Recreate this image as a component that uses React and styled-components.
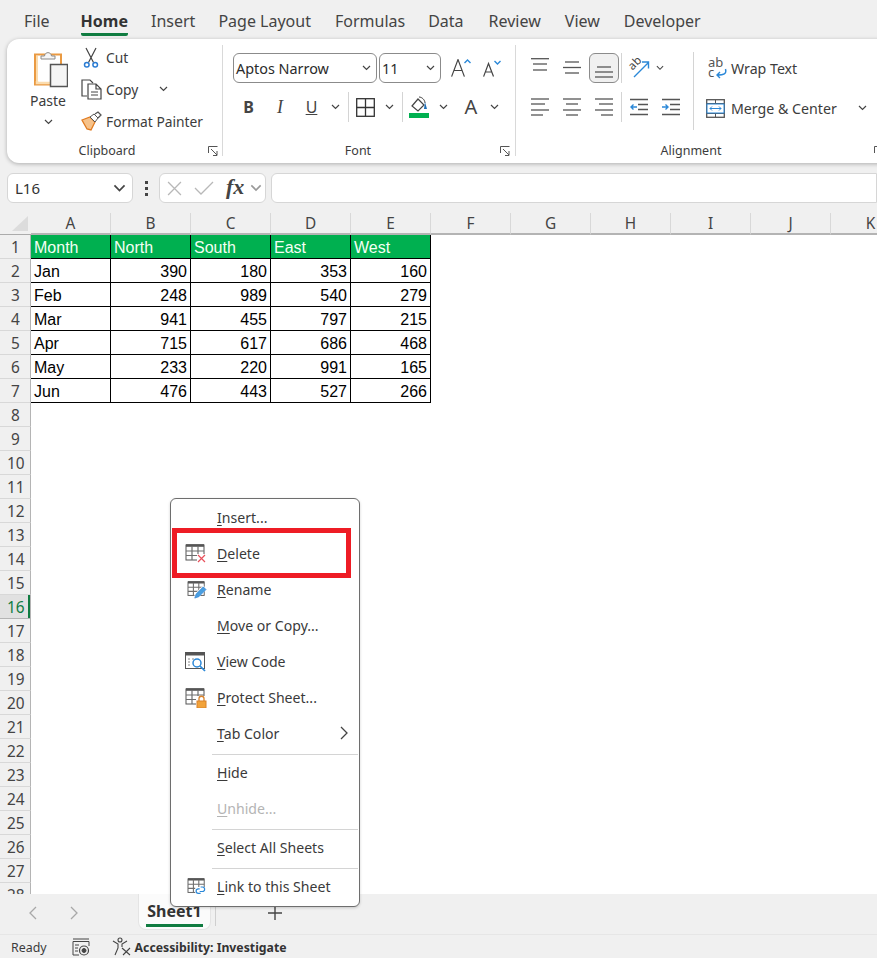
import React from "react";
import styled, { createGlobalStyle } from "styled-components";

const Global = createGlobalStyle`
  html, body { margin: 0; padding: 0; background: #f0f0f0; overflow: hidden; }
  * { box-sizing: border-box; }
`;
const UI = `"Noto Sans", "Open Sans", sans-serif`;

const Page = styled.div`
  position: relative; width: 877px; height: 958px; overflow: hidden;
  display: flex; flex-direction: column; background: #f0f0f0;
  font-family: ${UI}; color: #3c3c3c;
`;
const TabBar = styled.nav`
  height: 39px; flex: none; display: flex; gap: 23px; padding-left: 24px; align-items: flex-start;
`;
const MenuTab = styled.div`
  position: relative; height: 36px; line-height: 43px; font-size: 16px; white-space: nowrap;
  font-weight: ${p => (p.$active ? 700 : 400)};
  color: ${p => (p.$active ? "#333" : "#444")};
  margin-right: ${p => p.$mr || 0}px;
  border-bottom: ${p => (p.$active ? "3px solid #107c41" : "none")};
  border-radius: 0 0 2px 2px;
`;
const Ribbon = styled.section`
  flex: none; margin-left: 7px; width: 920px; height: 124px; padding-top: 3px; display: flex;
  background: #fff; border-radius: 12px 0 0 12px; box-shadow: 0 1px 4px rgba(0,0,0,.28);
`;
const Group = styled.div`
  flex: none; width: ${p => p.$w}px; height: 118px; display: flex; flex-direction: column;
`;
const GroupBody = styled.div` height: 100px; display: flex; padding-left: ${p => p.$pl || 0}px; `;
const Divider = styled.div` flex: none; width: 1px; height: 111px; margin-top: 3px; background: #d9d9d9; `;
const Footer = styled.div` height: 16px; margin-top: 1px; display: flex; align-items: center; padding-right: ${p => p.$pr || 4}px; `;
const GroupLabel = styled.div`
  width: ${p => p.$w}px; flex: none; text-align: center; font-size: 12.5px; color: #3c3c3c; line-height: 18px;
`;
const LauncherSlot = styled.div` margin-left: auto; width: 10px; height: 10px; display: flex; `;
const PasteCol = styled.div`
  width: 48px; margin-left: 17px; display: flex; flex-direction: column; align-items: center; padding-top: 8px;
`;
const PasteGlyph = styled.div` margin-left: 4px; display: flex; `;
const PasteLabel = styled.div` font-size: 14px; line-height: 20px; margin-top: 3px; `;
const PasteChev = styled.div` height: 16px; margin-top: 3px; display: flex; align-items: center; `;
const SmallCol = styled.div` margin: -1px 0 0 8px; display: flex; flex-direction: column; `;
const SmallItem = styled.div` height: 32px; display: flex; align-items: center; font-size: 13.8px; color: #3c3c3c; white-space: nowrap; `;
const SmallIcon = styled.div` width: 26px; flex: none; display: flex; padding-left: ${p => p.$pl || 1}px; `;
const ChevGap = styled.div` margin-left: ${p => p.$ml}px; display: flex; `;
const FontCol = styled.div` display: flex; flex-direction: column; padding-top: 11px; `;
const ToolRow = styled.div` height: 30px; display: flex; align-items: center; margin-bottom: 9px; `;
const SelectBox = styled.div`
  width: ${p => p.$w}px; height: 30px; margin-right: 2px; padding: 0 5px 0 2px; display: flex; align-items: center; justify-content: space-between;
  border: 1px solid #8b8b8b; border-radius: 6px; font-size: 14.4px; color: #2b2b2b; background: #fff;
`;
const IconBtn = styled.div`
  flex: none; width: ${p => p.$w || 32}px; height: 30px; display: flex; align-items: center; justify-content: center;
  margin-left: ${p => p.$ml || 0}px;
  ${p => p.$on ? "background:#f0f0f0; border:1px solid #8b8b8b; border-radius:6px; width:30px; margin:0 1px;" : ""}
`;
const VSep = styled.div` flex: none; width: 1px; height: 30px; background: #d4d4d4; margin: 0 ${p => p.$mr ?? 0}px 0 ${p => p.$ml ?? 5}px; `;
const GlyphA = styled.span` font-size: ${p => p.$s}px; color: #444; line-height: 1; font-weight: ${p => p.$b || 400}; font-style: ${p => p.$i ? "italic" : "normal"}; font-family: ${p => p.$serif ? '"Liberation Serif", serif' : UI}; text-decoration: ${p => p.$u ? "underline" : "none"}; `;
const AlignLeft = styled.div` width: 177px; flex: none; padding: 11px 0 0 8px; display: flex; flex-direction: column; `;
const TallDivider = styled.div` flex: none; width: 1px; height: 78px; margin-top: 10px; background: #d4d4d4; `;
const AlignRight = styled.div` padding: 11px 0 0 11px; display: flex; flex-direction: column; gap: 10px; `;
const WideBtn = styled.div` height: 30px; display: flex; align-items: center; font-size: 14.2px; white-space: nowrap; color: #3c3c3c; `;
const WideIcon = styled.div` width: 26px; display: flex; flex: none; padding-left: ${p => p.$pl || 0}px; `;

const FormulaRow = styled.div` flex: none; margin-top: 10px; height: 30px; display: flex; padding-left: 7px; `;
const NameBox = styled.div`
  width: 126px; flex: none; display: flex; align-items: center; justify-content: space-between; padding: 0 6px 0 7px;
  background: #fff; border: 1px solid #d6d6d6; border-radius: 6px; font-size: 15px; color: #333;
`;
const Dots = styled.div` width: 26px; flex: none; display: flex; flex-direction: column; align-items: center; justify-content: center; gap: 3px; `;
const Dot = styled.i` width: 3px; height: 3px; background: #444; display: block; `;
const FxBox = styled.div`
  width: 107px; flex: none; display: flex; align-items: center; gap: 12px; background: #fff; border: 1px solid #d6d6d6; border-radius: 6px; padding-left: 7px;
`;
const FxGroup = styled.div` display: flex; align-items: center; gap: 6px; `;
const FxText = styled.span` font: italic 700 22px "Liberation Serif", serif; color: #444; margin-top: -3px; `;
const FormulaInput = styled.div` margin-left: 5px; flex: 1; background: #fff; border: 1px solid #d6d6d6; border-radius: 6px 0 0 6px; `;

const SheetArea = styled.div`
  flex: none; margin-top: 10px; height: 681px; overflow: hidden; background: #fff; position: relative;
  display: grid; grid-template-columns: 31px repeat(11, 80px); grid-template-rows: 22px; grid-auto-rows: 24px; align-content: start;
`;
const Corner = styled.div` background: #f0f0f0; border-bottom: 1px solid #ababab; display: flex; align-items: flex-end; justify-content: flex-end; padding: 0 3px 3px 0; `;
const Tri = styled.div` width: 16px; height: 15px; background: #dcdcdc; clip-path: polygon(100% 0, 100% 100%, 0 100%); `;
const ColHead = styled.div`
  background: #f0f0f0; border-right: 1px solid #d8d8d8; border-bottom: 2px solid #b4b4b4; text-align: center; font-size: 15.4px; line-height: 21px; color: #444;
`;
const RowHead = styled.div`
  position: relative; background: ${p => p.$sel ? "#e1e1e1" : "#f0f0f0"}; border-right: 1px solid #b4b4b4; border-bottom: 1px solid ${p => p.$sel ? "#b4b4b4" : "#d8d8d8"};
  padding-left: ${p => p.$n > 9 ? 7 : 11}px; font-size: 15.4px; line-height: 25px; color: ${p => p.$sel ? "#107c41" : "#444"};
  ${p => p.$sel ? "box-shadow: inset -2px 0 0 #107c41;" : ""}
`;
const Cell = styled.div`
  font: 16px/26px "Liberation Sans", Arial, sans-serif; color: ${p => p.$head ? "#f4fff4" : "#000"};
  background: ${p => p.$head ? "#00b050" : "#fff"};
  text-align: ${p => p.$num ? "right" : "left"};
  padding: 0 3px;
  ${p => p.$table ? "border-right:1px solid #000; border-bottom:1px solid #000;" : ""}
`;

const TabsRow = styled.div` flex: none; height: 40px; display: flex; background: #f0f0f0; position: relative; `;
const NavArea = styled.div` width: 138px; display: flex; padding: 12px 0 0 29px; gap: 33px; height: 30px; `;
const SheetTab = styled.div`
  width: 73px; height: 36px; background: #fbfbfb; border: 1px solid #e4e4e4; border-top: none; border-radius: 0 0 8px 8px;
  display: flex; justify-content: center;
`;
const SheetName = styled.div`
  height: 33px; padding: 0 1px; font-size: 16px; font-weight: 700; line-height: 34px; color: #333; border-bottom: 3px solid #107c41; overflow: hidden;
`;
const TabSep = styled.div` width: 1px; height: 29px; margin: 3px 0 0 4px; background: #cfcfcf; `;
const PlusSlot = styled.div` margin: 11px 0 0 51px; display: flex; `;
const StatusBar = styled.footer`
  flex: none; height: 24px; display: flex; align-items: center; padding: 2px 0 0 11px; font-size: 12.4px; color: #3c3c3c; border-top: 1px solid #e6e6e6;
`;
const StatusIcon = styled.div` display: flex; margin: -2px 0 0 ${p => p.$ml}px; `;
const StatusBold = styled.b` margin-left: 4px; font-size: 12.25px; color: #333; white-space: nowrap; `;

const ContextMenu = styled.div`
  position: absolute; left: 170px; top: 498px; width: 190px; height: 409px; padding-top: 2px; background: #fff;
  border: 1px solid #6e6e6e; border-radius: 6px; box-shadow: 0 1px 3px rgba(0,0,0,.18);
`;
const MenuItem = styled.div`
  height: 36px; display: flex; align-items: center; font-size: 14.1px; white-space: nowrap; color: ${p => p.$off ? "#b4b4b4" : "#3a3a3a"};
  position: relative;
`;
const MenuIcon = styled.div` width: 46px; flex: none; padding-left: ${p => p.$pl || 14}px; margin-top: -3px; display: flex; `;
const MenuText = styled.span` padding-bottom: 4px; `;
const MenuSep = styled.div` height: 1px; margin: 1px 1px 1px 41px; background: #d4d4d4; `;
const SubArrow = styled.div` position: absolute; right: 11px; top: 9px; display: flex; `;
const Mn = styled.span` text-decoration: underline; text-underline-offset: 2px; `;
const RedBox = styled.div` position: absolute; left: 1px; top: 29px; width: 179px; height: 50px; border: 5px solid #ee1c25; pointer-events: none; `;

const Chev = ({ w = 9, c = "#444" }) => (
  <svg width={w} height={w * 2 / 3} viewBox="0 0 9 6" fill="none"><path d="M1 1l3.5 3.5L8 1" stroke={c} strokeWidth="1.2" /></svg>
);
const Launcher = () => (
  <svg width="10" height="10" viewBox="0 0 10 10" fill="none" stroke="#555"><path d="M.5 7V.5h9" /><path d="M3 3l6 6M9 5v4.5H5" /></svg>
);
const PasteIcon = () => (
  <svg width="35" height="38" viewBox="0 0 35 38" fill="none">
    <rect x="2" y="4.5" width="26" height="30" fill="#fff" stroke="#ea9a42" strokeWidth="2" />
    <path d="M4 31v2h22v-2" stroke="#fbdcae" strokeWidth="2.5" />
    <path d="M4 6v26" stroke="#fbdcae" strokeWidth="2" />
    <path d="M8 9V6h3.5c.5-4.5 6.500-4.5 7 0H22v3z" fill="#f6f6f6" stroke="#8a8a8a" />
    <rect x="17.5" y="14.5" width="17" height="22" fill="#f5f5f5" stroke="#555" strokeWidth="1.5" />
  </svg>
);
const Scissors = () => (
  <svg width="16" height="21" viewBox="0 0 16 21" fill="none">
    <path d="M3 1l7.5 14.5M13 1L5.5 15.5" stroke="#444" strokeWidth="1.2" />
    <circle cx="3.8" cy="17.8" r="2.3" stroke="#2b7cd3" strokeWidth="1.5" />
    <circle cx="12.2" cy="17.8" r="2.3" stroke="#2b7cd3" strokeWidth="1.5" />
  </svg>
);
const CopyIcon = () => (
  <svg width="21" height="21" viewBox="0 0 21 21" fill="none" stroke="#444" strokeWidth="1.2">
    <path d="M6 17H1V1h8l3 3" /><path d="M7 5h8l5 5v10H7zM15 5v5h5" fill="#fff" /><path d="M10 13h7M10 16h7" strokeWidth="1" />
  </svg>
);
const PainterIcon = () => (
  <svg width="21" height="20" viewBox="0 0 21 20" fill="none">
    <path d="M1 9l8-3 5 5-4 8-4-1z" fill="#f6c28a" stroke="#e07a1f" strokeWidth="1.3" />
    <path d="M9 6l4-3 4 4-3 4z" fill="#fff" stroke="#555" />
    <path d="M14 3l3-2 3 3-3 3" stroke="#555" strokeWidth="1.3" />
  </svg>
);
const GrowIcon = () => (
  <svg width="20" height="18" viewBox="0 0 20 18" fill="none">
    <path d="M.6 17.6L7 .6l6.4 17M3 11.5h8" stroke="#444" strokeWidth="1.2" />
    <path d="M13.5 4l3-3 3 3" stroke="#2b88d8" strokeWidth="1.4" />
  </svg>
);
const ShrinkIcon = () => (
  <svg width="18" height="17" viewBox="0 0 18 17" fill="none">
    <path d="M.6 16.6L5.5 3.5l5 13M2.5 12h6" stroke="#444" strokeWidth="1.2" />
    <path d="M11.5 1l3 3 3-3" stroke="#2b88d8" strokeWidth="1.4" />
  </svg>
);
const BordersIcon = () => (
  <svg width="19" height="19" viewBox="0 0 19 19" fill="none" stroke="#333" strokeWidth="1.3"><rect x=".7" y=".7" width="17.6" height="17.6" /><path d="M9.5 1v17M1 9.5h17" /></svg>
);
const FillIcon = () => (
  <svg width="20" height="22" viewBox="0 0 20 22" fill="none">
    <path d="M3 10l6-7 6 6-6 6z" stroke="#444" strokeWidth="1.2" fill="#fff" />
    <path d="M10 1c3 0 6 3 6 6" stroke="#444" /><path d="M16 6l2 7h-3z" fill="#1e6fb8" />
    <rect y="17" width="20" height="5" fill="#00b050" />
  </svg>
);
const Lines = ({ ys, xs = [] }) => (
  <svg width="18" height="20" viewBox="0 0 18 20" fill="none">
    {ys.map((y, i) => {
      const [a, b] = xs[i] || [0, 18];
      return <path key={i} d={`M${a} ${y}H${b}`} stroke="#555" strokeWidth="1.3" />;
    })}
  </svg>
);
const Indent = ({ dir }) => (
  <svg width="18" height="20" viewBox="0 0 18 20" fill="none">
    <path d="M0 2.5h18M8 7.5h10M8 12.5h10M0 17.5h18" stroke="#555" strokeWidth="1.3" />
    <path d={dir === "l" ? "M7 10H1M3.5 7.5L1 10l2.5 2.5" : "M0 10h6M3.5 7.5L6 10l-2.5 2.5"} stroke="#2b88d8" strokeWidth="1.4" />
  </svg>
);
const OrientIcon = () => (
  <svg width="22" height="22" viewBox="0 0 22 22" fill="none" overflow="visible">
    <text x="1" y="11" fontSize="11.5" fill="#444" fontFamily="Noto Sans" transform="rotate(-45 6 8)">ab</text>
    <path d="M6 20L20 6M14 5h6.5v6.5" stroke="#2b88d8" strokeWidth="1.4" />
  </svg>
);
const WrapIcon = () => (
  <svg width="22" height="22" viewBox="0 0 22 22" fill="none" overflow="visible">
    <text x="3" y="10" fontSize="13" fill="#555" fontFamily="Noto Sans">ab</text>
    <text x="3" y="20" fontSize="13" fill="#555" fontFamily="Noto Sans">c</text>
    <path d="M20.5 12c1.5 5-2 6-8 6M15 15l-3 3 3 3" stroke="#2b88d8" strokeWidth="1.4" />
  </svg>
);
const MergeIcon = () => (
  <svg width="19" height="19" viewBox="0 0 19 19" fill="none">
    <rect x=".7" y=".7" width="17.6" height="17.6" stroke="#555" strokeWidth="1.3" />
    <path d="M1 4.5h17M1 14.5h17M9.5 1v3.5M9.5 14.5V18" stroke="#555" />
    <rect x="1" y="5" width="17" height="9" stroke="#2b88d8" fill="#fff" />
    <path d="M4 9.5h11M6 7.5l-2 2 2 2M13 7.5l2 2-2 2" stroke="#2b88d8" />
  </svg>
);
const XMark = () => (
  <svg width="15" height="15" viewBox="0 0 14 14" fill="none"><path d="M1 1l12 12M13 1L1 13" stroke="#b8b8b8" strokeWidth="1.2" /></svg>
);
const CheckMark = () => (
  <svg width="20" height="14" viewBox="0 0 20 14" fill="none"><path d="M1 7l6 6L19 1" stroke="#b8b8b8" strokeWidth="1.3" /></svg>
);
const SheetGridIcon = ({ children, w = 22, h = 20 }) => (
  <svg width={w} height={h} viewBox="0 0 22 20" fill="none">
    <rect x="1" y="1" width="18" height="15" stroke="#555" strokeWidth="1" />
    <path d="M1 1.5h18" stroke="#555" strokeWidth="2.6" />
    <path d="M1 7h18M1 11.5h18M7 2v14M13 2v14" stroke="#6e6e6e" strokeWidth="1.2" />
    {children}
  </svg>
);
const DeleteIcon = () => (
  <SheetGridIcon>
    <rect x="12" y="10" width="10" height="10" fill="#fff" />
    <path d="M13 11l7 7M20 11l-7 7" stroke="#e8505b" strokeWidth="1.2" />
  </SheetGridIcon>
);
const RenameIcon = () => (
  <SheetGridIcon w={20} h={18}>
    <path d="M7 20l2-6 9-9 4 4-9 9z" fill="#fff" />
    <path d="M8.500 19l1.500-4.500 8-8 3 3-8 8z" fill="#4a9fe0" stroke="#2b7cd3" strokeWidth=".7" />
  </SheetGridIcon>
);
const ViewCodeIcon = () => (
  <svg width="22" height="20" viewBox="0 0 22 20" fill="none">
    <rect x=".5" y=".5" width="19" height="16" fill="#fff" stroke="#555" />
    <path d="M0 2h20" stroke="#555" strokeWidth="3" />
    <path d="M3 7h2M7 7h2M3 10h2M3 13h2" stroke="#888" />
    <circle cx="12" cy="11" r="4" stroke="#2b88d8" strokeWidth="1.5" fill="#fff" />
    <path d="M15 14l5 5" stroke="#2b88d8" strokeWidth="1.7" />
  </svg>
);
const ProtectIcon = () => (
  <SheetGridIcon>
    <rect x="11" y="8" width="11" height="12" fill="#fff" />
    <rect x="12" y="13" width="9" height="7" fill="#f2a33a" stroke="#d9822b" />
    <path d="M14 13v-2.5c0-3 5-3 5 0V13" stroke="#d9822b" strokeWidth="1.3" />
  </SheetGridIcon>
);
const LinkIcon = () => (
  <SheetGridIcon w={20} h={18}>
    <rect x="9" y="10" width="13" height="10" fill="#fff" />
    <path d="M14 12h-1.5a2.5 2.5 0 000 5H15M14 15h3a2.5 2.5 0 000-5h-2" stroke="#2b88d8" strokeWidth="1.3" />
  </SheetGridIcon>
);
const Angle = ({ dir = "r", c = "#a8a8a8", h = 14 }) => (
  <svg width={h / 2 + 1} height={h} viewBox="0 0 8 14" fill="none"><path d={dir === "r" ? "M1 1l6 6-6 6" : "M7 1L1 7l6 6"} stroke={c} strokeWidth="1.3" /></svg>
);
const MacroIcon = () => (
  <svg width="18" height="18" viewBox="0 0 18 18" fill="none" stroke="#444">
    <path d="M1 1h16M1 3.5h16" /><path d="M1 3.5V17h6M17 3.5V8" /><path d="M3 7h4M3 10h3M3 13h3" />
    <circle cx="12" cy="12.5" r="4.5" strokeWidth="1.2" /><circle cx="12" cy="12.5" r="2" fill="#444" />
  </svg>
);
const AccessIcon = () => (
  <svg width="19" height="19" viewBox="0 0 19 19" fill="none" stroke="#444" strokeWidth="1.1">
    <circle cx="8" cy="3" r="2" />
    <path d="M1 4l5 3v4l-3 7M15 4l-5 3v3" />
    <path d="M10 11l8 7M18 11l-7 7" />
  </svg>
);

const TABS = [["Insert", 0], ["Page Layout", 1], ["Formulas", 0], ["Data", 2], ["Review", 1], ["View", 1], ["Developer", 0]];
const COLS = "ABCDEFGHIJK".split("");
const TABLE = [
  ["Month", "North", "South", "East", "West"],
  ["Jan", 390, 180, 353, 160],
  ["Feb", 248, 989, 540, 279],
  ["Mar", 941, 455, 797, 215],
  ["Apr", 715, 617, 686, 468],
  ["May", 233, 220, 991, 165],
  ["Jun", 476, 443, 527, 266],
];
const ROWS = Array.from({ length: 28 }, (_, i) => i + 1);

const Label = ({ text }) => (
  <MenuText><Mn>{text[0]}</Mn>{text.slice(1)}</MenuText>
);

export default function App() {
  return (
    <Page>
      <Global />
      <TabBar>
        <MenuTab $mr={8}>File</MenuTab>
        <MenuTab $active>Home</MenuTab>
        {TABS.map(([t, m]) => <MenuTab key={t} $mr={m}>{t}</MenuTab>)}
      </TabBar>

      <Ribbon>
        <Group $w={215}>
          <GroupBody>
            <PasteCol>
              <PasteGlyph><PasteIcon /></PasteGlyph>
              <PasteLabel>Paste</PasteLabel>
              <PasteChev><Chev /></PasteChev>
            </PasteCol>
            <SmallCol>
              <SmallItem><SmallIcon $pl={3}><Scissors /></SmallIcon>Cut</SmallItem>
              <SmallItem><SmallIcon><CopyIcon /></SmallIcon>Copy<ChevGap $ml={21}><Chev /></ChevGap></SmallItem>
              <SmallItem><SmallIcon><PainterIcon /></SmallIcon>Format Painter</SmallItem>
            </SmallCol>
          </GroupBody>
          <Footer><GroupLabel $w={200}>Clipboard</GroupLabel><LauncherSlot><Launcher /></LauncherSlot></Footer>
        </Group>
        <Divider />
        <Group $w={292}>
          <GroupBody $pl={10}>
            <FontCol>
              <ToolRow>
                <SelectBox $w={144}>Aptos Narrow<Chev /></SelectBox>
                <SelectBox $w={62}>11<Chev /></SelectBox>
                <IconBtn $w={32} $ml={2}><GrowIcon /></IconBtn>
                <IconBtn $w={30}><ShrinkIcon /></IconBtn>
              </ToolRow>
              <ToolRow>
                <IconBtn $w={31}><GlyphA $s={16} $b={700}>B</GlyphA></IconBtn>
                <IconBtn $w={32}><GlyphA $s={18} $i $serif>I</GlyphA></IconBtn>
                <IconBtn $w={31}><GlyphA $s={16} $u>U</GlyphA></IconBtn>
                <IconBtn $w={16}><Chev /></IconBtn>
                <VSep />
                <IconBtn><BordersIcon /></IconBtn>
                <IconBtn $w={16}><Chev /></IconBtn>
                <VSep />
                <IconBtn><FillIcon /></IconBtn>
                <IconBtn $w={16}><Chev /></IconBtn>
                <IconBtn $ml={4}><GlyphA $s={20}>A</GlyphA></IconBtn>
                <IconBtn $w={16} $ml={-1}><Chev /></IconBtn>
              </ToolRow>
            </FontCol>
          </GroupBody>
          <Footer $pr={5}><GroupLabel $w={270}>Font</GroupLabel><LauncherSlot><Launcher /></LauncherSlot></Footer>
        </Group>
        <Divider />
        <Group $w={400}>
          <GroupBody>
            <AlignLeft>
              <ToolRow>
                <IconBtn><Lines ys={[0.7, 6, 12]} xs={[[0, 18], [2, 16], [2, 16]]} /></IconBtn>
                <IconBtn><Lines ys={[4, 9.5, 15]} xs={[[2, 16], [0, 18], [2, 16]]} /></IconBtn>
                <IconBtn $on><Lines ys={[9, 14, 19]} xs={[[2, 16], [0, 18], [0, 18]]} /></IconBtn>
                <VSep $ml={1} />
                <IconBtn $w={34}><OrientIcon /></IconBtn>
                <IconBtn $w={8}><Chev /></IconBtn>
              </ToolRow>
              <ToolRow>
                <IconBtn><Lines ys={[2, 7, 13, 18]} xs={[[0, 18], [0, 14], [0, 18], [0, 12]]} /></IconBtn>
                <IconBtn><Lines ys={[2, 7, 13, 18]} xs={[[0, 18], [3, 15], [0, 18], [3, 15]]} /></IconBtn>
                <IconBtn><Lines ys={[2, 7, 13, 18]} xs={[[0, 18], [4, 18], [0, 18], [6, 18]]} /></IconBtn>
                <VSep $ml={1} $mr={1} />
                <IconBtn><Indent dir="l" /></IconBtn>
                <IconBtn><Indent dir="r" /></IconBtn>
              </ToolRow>
            </AlignLeft>
            <TallDivider />
            <AlignRight>
              <WideBtn><WideIcon><WrapIcon /></WideIcon>Wrap Text</WideBtn>
              <WideBtn><WideIcon $pl={1}><MergeIcon /></WideIcon>Merge &amp; Center<ChevGap $ml={21}><Chev /></ChevGap></WideBtn>
            </AlignRight>
          </GroupBody>
          <Footer $pr={32}><GroupLabel $w={350}>Alignment</GroupLabel><LauncherSlot><Launcher /></LauncherSlot></Footer>
        </Group>
      </Ribbon>

      <FormulaRow>
        <NameBox>L16<Chev w={13} /></NameBox>
        <Dots><Dot /><Dot /><Dot /></Dots>
        <FxBox>
          <XMark />
          <CheckMark />
          <FxGroup>
            <FxText>fx</FxText>
            <Chev w={12} c="#999" />
          </FxGroup>
        </FxBox>
        <FormulaInput />
      </FormulaRow>

      <SheetArea>
        <Corner><Tri /></Corner>
        {COLS.map(c => <ColHead key={c}>{c}</ColHead>)}
        {ROWS.map(r => (
          <React.Fragment key={r}>
            <RowHead $n={r} $sel={r === 16}>{r}</RowHead>
            {COLS.map((c, i) => {
              const row = TABLE[r - 1];
              const v = row && i < 5 ? row[i] : "";
              return (
                <Cell key={c} $table={row && i < 5} $head={r === 1 && i < 5} $num={typeof v === "number"}>{v}</Cell>
              );
            })}
          </React.Fragment>
        ))}
      </SheetArea>

      <TabsRow>
        <NavArea><Angle dir="l" /><Angle dir="r" /></NavArea>
        <SheetTab><SheetName>Sheet1</SheetName></SheetTab>
        <TabSep />
        <PlusSlot>
          <svg width="16" height="16" viewBox="0 0 16 16" fill="none"><path d="M8 1v14M1 8h14" stroke="#444" strokeWidth="1.4" /></svg>
        </PlusSlot>
      </TabsRow>
      <StatusBar>
        Ready
        <StatusIcon $ml={25}><MacroIcon /></StatusIcon>
        <StatusIcon $ml={22}><AccessIcon /></StatusIcon>
        <StatusBold>Accessibility: Investigate</StatusBold>
      </StatusBar>

      <ContextMenu>
        <MenuItem><MenuIcon /><Label text="Insert..." /></MenuItem>
        <MenuItem><MenuIcon><DeleteIcon /></MenuIcon><Label text="Delete" /></MenuItem>
        <MenuItem><MenuIcon $pl={16}><RenameIcon /></MenuIcon><Label text="Rename" /></MenuItem>
        <MenuItem><MenuIcon /><Label text="Move or Copy..." /></MenuItem>
        <MenuItem><MenuIcon><ViewCodeIcon /></MenuIcon><Label text="View Code" /></MenuItem>
        <MenuItem><MenuIcon><ProtectIcon /></MenuIcon><Label text="Protect Sheet..." /></MenuItem>
        <MenuItem><MenuIcon /><Label text="Tab Color" /><SubArrow><Angle c="#444" /></SubArrow></MenuItem>
        <MenuSep />
        <MenuItem><MenuIcon /><Label text="Hide" /></MenuItem>
        <MenuItem $off><MenuIcon /><Label text="Unhide..." /></MenuItem>
        <MenuSep />
        <MenuItem><MenuIcon /><Label text="Select All Sheets" /></MenuItem>
        <MenuSep />
        <MenuItem><MenuIcon $pl={16}><LinkIcon /></MenuIcon><Label text="Link to this Sheet" /></MenuItem>
        <RedBox />
      </ContextMenu>
    </Page>
  );
}
